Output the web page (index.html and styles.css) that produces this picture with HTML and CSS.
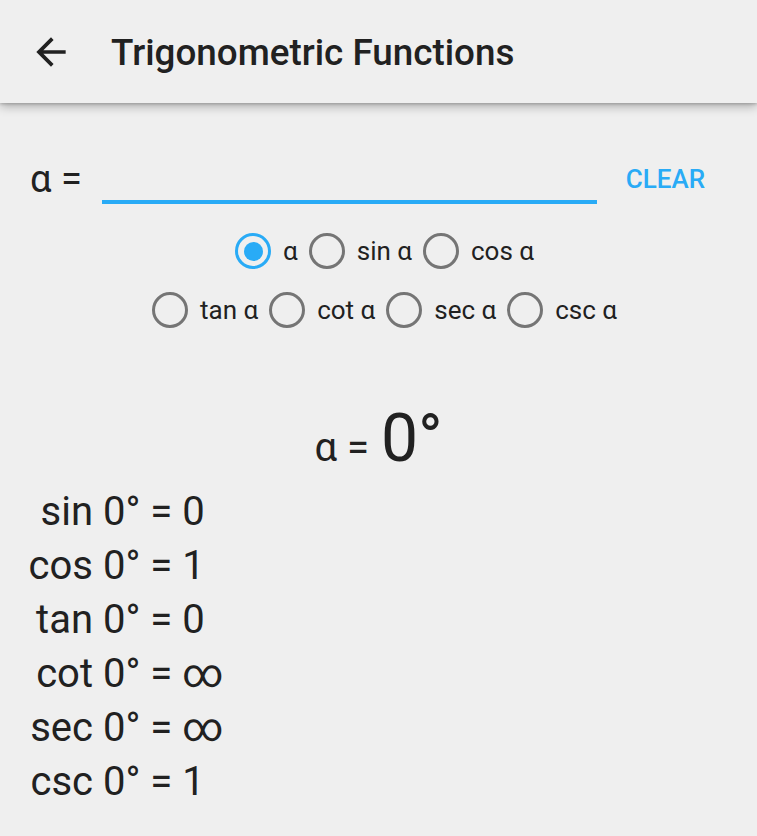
FILE: index.html
```html
<!DOCTYPE html>
<html>
<head>
<meta charset="utf-8">
<link rel="stylesheet" href="styles.css">
</head>
<body>
<header class="appbar">
  <svg class="back" viewBox="0 0 24 24"><path d="M20 11H7.83l5.59-5.59L12 4l-8 8 8 8 1.41-1.41L7.83 13H20v-2z"/></svg>
  <h1 class="title">Trigonometric Functions</h1>
</header>
<main class="content">
  <div class="field-row">
    <span class="field-label">α =</span>
    <div class="field"></div>
    <span class="clear">CLEAR</span>
  </div>
  <div class="radios">
    <div class="radio-row">
      <span class="radio checked"></span><span class="rlabel">α</span>
      <span class="radio"></span><span class="rlabel">sin α</span>
      <span class="radio"></span><span class="rlabel">cos α</span>
    </div>
    <div class="radio-row">
      <span class="radio"></span><span class="rlabel">tan α</span>
      <span class="radio"></span><span class="rlabel">cot α</span>
      <span class="radio"></span><span class="rlabel">sec α</span>
      <span class="radio"></span><span class="rlabel">csc α</span>
    </div>
  </div>
  <div class="angle"><span class="angle-small">α =</span><span class="angle-big">0°</span></div>
  <div class="results">
    <span class="fn">sin</span><span class="val">0° = 0</span>
    <span class="fn">cos</span><span class="val">0° = 1</span>
    <span class="fn">tan</span><span class="val">0° = 0</span>
    <span class="fn">cot</span><span class="val">0° = ∞</span>
    <span class="fn">sec</span><span class="val">0° = ∞</span>
    <span class="fn">csc</span><span class="val">0° = 1</span>
  </div>
</main>
</body>
</html>
```
FILE: styles.css
```css
html, body {
  margin: 0;
  padding: 0;
  background: #efefef;
  font-family: Roboto, "Noto Sans", sans-serif;
  color: #212121;
}
.appbar {
  height: 103px;
  box-sizing: border-box;
  padding-top: 2px;
  display: flex;
  align-items: center;
  background: #efefef;
  box-shadow: 0 3px 10px rgba(0,0,0,0.3), 0 1px 3px rgba(0,0,0,0.2);
  position: relative;
}
.back {
  width: 44px;
  height: 44px;
  margin: -2px 0 0 29px;
  fill: #212121;
}
.title {
  margin: 0 0 0 38px;
  font-size: 36.8px;
  font-weight: 500;
  letter-spacing: 0;
}
.content {
  padding: 0 0 0 28px;
}
.field-row {
  display: flex;
  align-items: flex-end;
  margin-top: 51px;
  height: 50px;
}
.field-label {
  font-size: 38px;
  line-height: 50px;
  margin-right: 20px;
  padding-left: 2px;
}
.field {
  flex: 0 0 495px;
  height: 46px;
  border-bottom: 4px solid #29abf6;
}
.clear {
  font-size: 26px;
  font-weight: 500;
  color: #29abf6;
  margin-left: 29px;
  line-height: 50px;
  align-self: center;
}
.radios {
  margin-top: 29px;
  display: flex;
  flex-direction: column;
  gap: 23px;
}
.radio-row {
  display: flex;
  justify-content: center;
  align-items: center;
  padding-right: 5px;
  height: 36px;
}
.radio {
  width: 36px;
  height: 36px;
  box-sizing: border-box;
  border: 3.5px solid #757575;
  border-radius: 50%;
  position: relative;
}
.radio.checked {
  border-color: #29abf6;
}
.radio.checked::after {
  content: "";
  position: absolute;
  left: 50%;
  top: 50%;
  width: 19px;
  height: 19px;
  margin: -9.5px 0 0 -9.5px;
  border-radius: 50%;
  background: #29abf6;
}
.rlabel {
  font-size: 26px;
  padding: 0 11px 0 12px;
}
.angle {
  text-align: center;
  margin-top: 76px;
  padding-right: 28px;
  line-height: 70px;
  margin-bottom: -6px;
}
.angle-small {
  font-size: 40px;
  margin-right: 12px;
}
.angle-big {
  font-size: 66px;
}
.results {
  display: grid;
  grid-template-columns: 65px auto;
  justify-content: start;
  column-gap: 10px;
  font-size: 40px;
  line-height: 54px;
}
.fn {
  text-align: right;
}
```
